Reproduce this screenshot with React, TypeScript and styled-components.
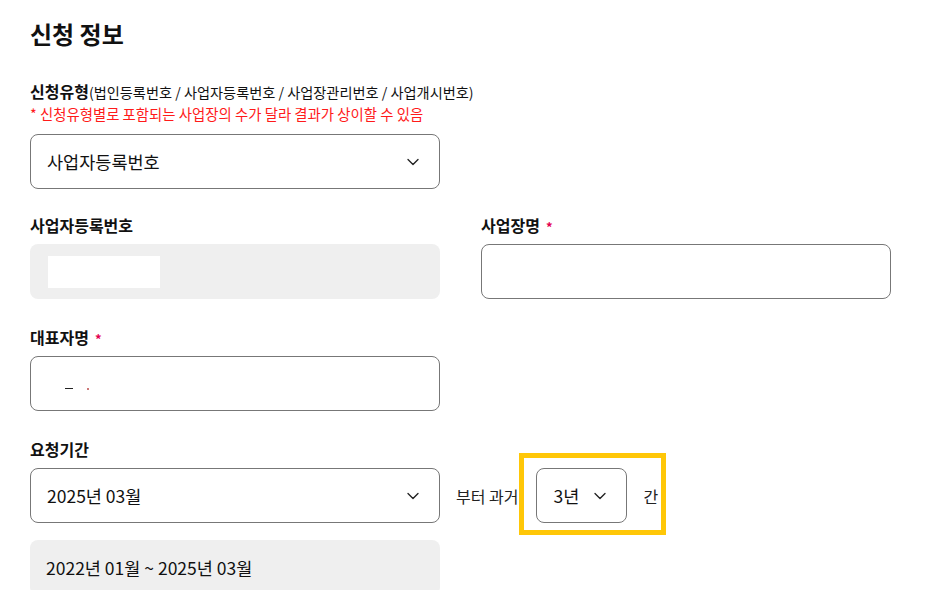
import React from "react";
import styled, { createGlobalStyle } from "styled-components";
import { ChevronDown } from "lucide-react";

const Global = createGlobalStyle`
  html, body { margin: 0; padding: 0; background: #fff; }
  body { font-family: "Noto Sans CJK KR", "Noto Sans", sans-serif; color: #111; }
  *, *::before, *::after { box-sizing: border-box; }
`;

const Page = styled.div`
  width: 926px;
  height: 590px;
  overflow: hidden;
  padding: 17px 30px 0 30px;
`;

const Title = styled.h2`
  margin: 0 0 29px;
  font-size: 24px;
  line-height: 34px;
  font-weight: 700;
  color: #111;
`;

const TypeLabel = styled.div`
  font-size: 16px;
  line-height: 22px;
  font-weight: 700;
  color: #111;
  & > span {
    font-weight: 400;
    font-size: 14.2px;
  }
`;

const Note = styled.div`
  font-size: 14.4px;
  line-height: 22px;
  color: #ff1a1a;
  margin-bottom: 9px;
`;

const Grid = styled.div`
  display: grid;
  grid-template-columns: 410px 410px;
  column-gap: 41px;
  row-gap: 27px;
  margin-top: 1px;
`;

const Field = styled.div`
  display: flex;
  flex-direction: column;
  gap: 8px;
`;

const Label = styled.div`
  font-size: 16px;
  line-height: 22px;
  font-weight: 700;
  color: #111;
  display: flex;
  align-items: center;
  gap: 6px;
`;

const Req = styled.span`
  color: #e4004f;
  font-size: 13px;
  font-weight: 700;
  line-height: 1;
  margin-top: 3px;
`;

const Box = styled.div<{ $disabled?: boolean; $w?: number }>`
  width: ${(p) => (p.$w ? `${p.$w}px` : "410px")};
  height: 55px;
  border-radius: 8px;
  border: ${(p) => (p.$disabled ? "none" : "1px solid #777")};
  background: ${(p) => (p.$disabled ? "#efefef" : "#fff")};
  display: flex;
  align-items: center;
  justify-content: space-between;
  padding: 0 16px 0 16px;
  font-size: 17.5px;
  color: #111;
  flex-shrink: 0;
`;

const SelectTop = styled(Box)`
  margin-bottom: 25px;
`;

const Mask = styled.span`
  display: block;
  width: 112px;
  height: 32px;
  background: #fff;
  margin-left: 2px;
`;

const Dash = styled.span`
  display: inline-block;
  width: 8px;
  height: 1px;
  background: #222;
  margin: 10px 0 0 18px;
`;

const Dot = styled.span`
  display: inline-block;
  width: 2px;
  height: 2px;
  background: #c77;
  margin: 10px 0 0 14px;
`;

const Left = styled.div`
  display: flex;
  align-items: center;
`;

const PeriodRow = styled.div`
  display: flex;
  align-items: center;
  gap: 16px;
`;

const Inline = styled.span`
  font-size: 16px;
  color: #222;
  white-space: nowrap;
`;

const Highlight = styled.div`
  position: relative;
  display: flex;
  align-items: center;
  gap: 16px;
  margin-left: 2px;
  &::after {
    content: "";
    position: absolute;
    left: -17px;
    top: -15px;
    width: 147px;
    height: 82px;
    border: 5px solid #ffc707;
    pointer-events: none;
  }
`;

const Range = styled(Box)`
  margin-top: 9px;
`;

const Chevron = () => <ChevronDown size={20} strokeWidth={1.6} color="#222" />;

export default function App() {
  return (
    <Page>
      <Global />
      <Title>신청 정보</Title>
      <TypeLabel>
        신청유형<span>(법인등록번호 / 사업자등록번호 / 사업장관리번호 / 사업개시번호)</span>
      </TypeLabel>
      <Note>* 신청유형별로 포함되는 사업장의 수가 달라 결과가 상이할 수 있음</Note>
      <SelectTop>
        <span>사업자등록번호</span>
        <Chevron />
      </SelectTop>
      <Grid>
        <Field>
          <Label>사업자등록번호</Label>
          <Box $disabled>
            <Mask />
          </Box>
        </Field>
        <Field>
          <Label>
            사업장명<Req>*</Req>
          </Label>
          <Box />
        </Field>
        <Field>
          <Label>
            대표자명<Req>*</Req>
          </Label>
          <Box>
            <Left>
              <Dash />
              <Dot />
            </Left>
          </Box>
        </Field>
        <div />
        <Field>
          <Label>요청기간</Label>
          <PeriodRow>
            <Box>
              <span>2025년 03월</span>
              <Chevron />
            </Box>
            <Inline>부터 과거</Inline>
            <Highlight>
              <Box $w={91}>
                <span>3년</span>
                <Chevron />
              </Box>
              <Inline>간</Inline>
            </Highlight>
          </PeriodRow>
          <Range $disabled>2022년 01월 ~ 2025년 03월</Range>
        </Field>
      </Grid>
    </Page>
  );
}
